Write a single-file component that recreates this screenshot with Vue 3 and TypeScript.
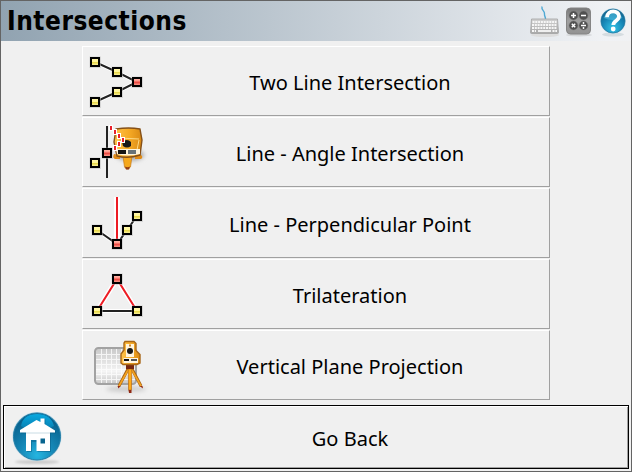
<script setup lang="ts">
interface Node { x: number; y: number; red?: boolean }
interface Item { label: string; kind: string; path?: string; nodes: Node[] }

const items: Item[] = [
  {
    label: 'Two Line Intersection', kind: 'lines', path: 'M12 15 34 25 54 35 34 45 12 55',
    nodes: [{ x: 7, y: 10 }, { x: 29, y: 20 }, { x: 29, y: 40 }, { x: 7, y: 50 }, { x: 49, y: 30, red: true }],
  },
  { label: 'Line - Angle Intersection', kind: 'angle', nodes: [{ x: 7, y: 40 }, { x: 19, y: 30, red: true }] },
  {
    label: 'Line - Perpendicular Point', kind: 'perp', path: 'M14 41 34 55 54 27',
    nodes: [{ x: 9, y: 36 }, { x: 39, y: 36 }, { x: 49, y: 22 }, { x: 29, y: 50, red: true }],
  },
  {
    label: 'Trilateration', kind: 'tri', path: 'M14 51H54',
    nodes: [{ x: 9, y: 46 }, { x: 49, y: 46 }, { x: 29, y: 14, red: true }],
  },
  { label: 'Vertical Plane Projection', kind: 'plane', nodes: [] },
]
const dashes = [[27, 8], [31, 12], [35, 16], [39, 20], [35, 24], [31, 28]]
</script>

<template>
  <main class="window">
    <header class="bar">
      <h1>Intersections</h1>
      <div class="tools">
        <svg width="29" height="34" viewBox="530 4 29 34">
          <defs>
            <linearGradient id="kb" x2="0" y2="1"><stop stop-color="#d2d2d2" /><stop offset="1" stop-color="#a9a9a9" /></linearGradient>
          </defs>
          <ellipse cx="545" cy="35" rx="14" ry="2" fill="#ddd" />
          <path d="M542 6.500c-1 4 3 4 2.500 7.500-.3 2 1 2.500 1 5" fill="none" stroke="#4fa9d4" stroke-width="1.400" />
          <path d="M531.500 19h26l1 13.500q0 1-1 1h-26q-1 0-1-1z" fill="url(#kb)" stroke="#a2a2a2" stroke-width=".8" />
          <path d="M532.500 22h24M532 25h25M532 28h25M532 31h4M552.500 31h4.500" stroke="#f6f6f6" stroke-width="1.800" stroke-dasharray="2 .8" />
          <path d="M538 31h13" stroke="#f6f6f6" stroke-width="1.800" />
        </svg>
        <svg width="28" height="34" viewBox="565 4 28 34">
          <defs>
            <linearGradient id="calc" x2="0" y2="1"><stop stop-color="#777" /><stop offset=".5" stop-color="#a0a0a0" /><stop offset="1" stop-color="#929292" /></linearGradient>
          </defs>
          <ellipse cx="579" cy="35" rx="13" ry="1.500" fill="#d4d6d8" />
          <rect x="566.500" y="8" width="24" height="26" rx="4" fill="url(#calc)" stroke="#858585" />
          <g fill="#505050" stroke="#777" stroke-width=".5">
            <circle cx="573.500" cy="15.500" r="4.400" /><circle cx="583.500" cy="15.500" r="4.400" />
            <circle cx="573.500" cy="25.500" r="4.400" /><circle cx="583.500" cy="25.500" r="4.400" />
          </g>
          <path d="M571 15.500h5M573.500 13v5M581 15.500h5M571.800 23.800l3.400 3.400M575.200 23.800l-3.400 3.400M581 25.500h5" stroke="#fff" stroke-width="1.500" />
          <circle cx="583.500" cy="23" r=".9" fill="#fff" /><circle cx="583.500" cy="28" r=".9" fill="#fff" />
        </svg>
        <svg width="28" height="34" viewBox="599 4 28 34">
          <defs>
            <radialGradient id="help" cx=".5" cy=".8" r=".75"><stop stop-color="#35c4e7" /><stop offset=".6" stop-color="#1685b5" /><stop offset="1" stop-color="#14628c" /></radialGradient>
          </defs>
          <ellipse cx="613" cy="34.500" rx="11" ry="2" fill="#d5dce0" />
          <circle cx="613" cy="21" r="12.800" fill="#bdd9e5" />
          <circle cx="613" cy="21" r="12" fill="url(#help)" stroke="#1e759f" stroke-width=".7" />
          <path d="M603.500 18a10 8 0 0 1 19 0q-10 4-19 0" fill="#5ec8e8" opacity=".5" />
          <path d="M607 17.200c.2-7.700 12-7.400 12-.9 0 4.600-5.700 4.200-5.700 8.700" fill="none" stroke="#fff" stroke-width="3.800" />
          <circle cx="613.200" cy="29" r="2.400" fill="#fff" />
        </svg>
      </div>
    </header>

    <nav class="menu">
      <button v-for="item in items" :key="item.kind" type="button" class="item">
        <svg class="icon" width="68" height="68" viewBox="0 0 68 68">
          <defs>
            <linearGradient :id="item.kind + '-y'" x2="0" y2="1"><stop stop-color="#fff6b0" /><stop offset=".45" stop-color="#fff69a" /><stop offset=".5" stop-color="#e5d43c" /><stop offset="1" stop-color="#fffab8" /></linearGradient>
            <linearGradient :id="item.kind + '-r'" x2="0" y2="1"><stop stop-color="#ffc5b8" /><stop offset=".4" stop-color="#ff9185" /><stop offset=".5" stop-color="#e83e37" /><stop offset="1" stop-color="#ffb8a8" /></linearGradient>
            <linearGradient :id="item.kind + '-o'"><stop stop-color="#ffc34b" /><stop offset=".55" stop-color="#f5a925" /><stop offset="1" stop-color="#d98913" /></linearGradient>
            <linearGradient :id="item.kind + '-g'" x2="0" y2="1"><stop stop-color="#c8c8c8" /><stop offset=".65" stop-color="#f5f5f5" /><stop offset="1" stop-color="#c6c6c6" /></linearGradient>
            <filter :id="item.kind + '-s'" x="-30%" y="-100%" width="160%" height="300%"><feGaussianBlur stdDeviation="2" /></filter>
          </defs>

          <template v-if="item.kind === 'angle'">
            <ellipse cx="47" cy="37" rx="14" ry="6" fill="#aaa" :filter="`url(#${item.kind}-s)`" />
            <path d="M40 38h9l-1.500 11q-3.500 4-6 0z" fill="#f5a81c" stroke="#c57919" stroke-width=".7" />
            <path d="M42 48.500q2.500 1.500 5 0l-1 3h-3z" fill="#933d15" />
            <path d="M31 36q-2 4 1 5h5v-4zM57 36q4 3 1 5h-6v-3z" fill="#df8b17" />
            <path d="M33 11q13-2 24 0l2 11-2 15q-12 4-23 1l-3-14z" :fill="`url(#${item.kind}-o)`" stroke="#855018" stroke-width="1.400" />
            <path d="M35 20l21 1M34 31l1-10M56 22l-2 10" stroke="#ffda83" stroke-width="1" />
            <path d="M39 24q5-4 9 0v4q-4 3-8 0z" fill="#191919" />
            <path d="M33 31h24v5q-12 3-23 0z" fill="#fff4da" />
            <path d="M35 32h8v4h-8z" fill="#151515" /><path d="M45 32h8v4h-8z" fill="#687277" />
            <path d="M24 8v52" stroke="#222" stroke-width="2" />
            <g fill="#fff">
              <rect v-for="(d, i) in dashes" :key="i" :x="d[0] - 1" :y="d[1] - 1" width="4" height="6" />
            </g>
            <g fill="#e8202b">
              <rect v-for="(d, i) in dashes" :key="i" :x="d[0]" :y="d[1]" width="2" height="4" />
            </g>
          </template>

          <template v-if="item.kind === 'plane'">
            <ellipse cx="43" cy="58" rx="20" ry="3" fill="#ccc" :filter="`url(#${item.kind}-s)`" />
            <rect x="12" y="17" width="41" height="36" rx="3.500" :fill="`url(#${item.kind}-g)`" stroke="#a2a2a2" stroke-width="2" />
            <path d="M18.500 18v34M23.500 18v34M28.500 18v34M33.500 18v34M38.500 18v34M13 23.500h39M13 28.500h39M13 33.500h39M13 38.500h39M13 43.500h39M13 48.500h39" stroke="#fff" opacity=".75" />
            <path d="M45 38 36 55M49 38 58 55" stroke="#a86415" stroke-width="3" />
            <path d="M45 39 36 55M49 39 58 55" stroke="#f4a321" stroke-width="1.600" />
            <path d="M45.200 38h3.600L48.400 59h-2.800z" fill="#ffab18" stroke="#bd741b" stroke-width=".8" />
            <path d="M34.500 55h3l-2 2.500zM56.500 55h3l.5 2.500zM45.500 59h3v3h-2.500z" fill="#912913" />
            <path d="M43 34h8v4h-8z" fill="#76260f" />
            <path d="M42 10.500h9l2 2v7l4 4v8.500l-3 1.500H40l-2-1.500v-9l3-4v-7z" :fill="`url(#${item.kind}-o)`" stroke="#a76617" stroke-width="1.400" />
            <path d="M43 13h8v13h-8zM40.500 27H55v5H40.500z" fill="#fff5df" />
            <circle cx="47" cy="20" r="3" fill="#171717" /><path d="M46 13.500h2v2h-2z" fill="#cf852a" />
            <path d="M41 28h5v2h-5z" fill="#111" /><path d="M48 28h6v2h-6z" fill="#555" />
          </template>

          <path v-if="item.path" :d="item.path" fill="none" stroke="#fff" stroke-width="4" />
          <path v-if="item.path" :d="item.path" fill="none" stroke="#222" stroke-width="2" />
          <template v-if="item.kind === 'perp'">
            <path d="M34 8v43" stroke="#fff" stroke-width="6" /><path d="M34 8v43" stroke="#ed1c24" stroke-width="2" />
          </template>
          <template v-if="item.kind === 'tri'">
            <path d="M14 51 34 19 54 51" fill="none" stroke="#fff" stroke-width="5" />
            <path d="M14 51 34 19 54 51" fill="none" stroke="#ed1c24" stroke-width="2" />
            <path d="M14 51H54" stroke="#222" stroke-width="2" />
          </template>
          <g v-for="(n, i) in item.nodes" :key="i">
            <rect :x="n.x - .5" :y="n.y - .5" width="11.500" height="11.500" fill="#bbb" opacity=".5" />
            <rect :x="n.x + 1" :y="n.y + 1" width="8" height="8" :fill="`url(#${item.kind}-${n.red ? 'r' : 'y'})`" stroke="#000" stroke-width="2" />
          </g>
        </svg>
        <span class="label">{{ item.label }}</span>
      </button>
    </nav>

    <button type="button" class="back">
      <svg class="icon" width="68" height="60" viewBox="5 407 68 60">
        <defs>
          <radialGradient id="home" cx=".5" cy=".9" r=".8"><stop stop-color="#25b5e0" /><stop offset=".45" stop-color="#1688b7" /><stop offset="1" stop-color="#08618d" /></radialGradient>
          <linearGradient id="gloss" x2="0" y2="1"><stop stop-color="#08a8df" /><stop offset="1" stop-color="#087bad" /></linearGradient>
          <filter id="soft" x="-20%" y="-100%" width="140%" height="300%"><feGaussianBlur stdDeviation="1.200" /></filter>
        </defs>
        <ellipse cx="37" cy="462" rx="22" ry="2" fill="#ccc" filter="url(#soft)" />
        <circle cx="37" cy="436.500" r="24.500" fill="#b9d7e4" />
        <circle cx="37" cy="436.500" r="23.500" fill="url(#home)" stroke="#217da7" />
        <path d="M21 426q2-12 16-12t17 12q-17 9-33 0" fill="url(#gloss)" />
        <path d="M20 430 36.500 420l4 2v-3.500h4v5.500L55 430.500v2h-5V451H36.500v-10H31v10h-5v-18.500h-6z" fill="#075b83" opacity=".5" transform="translate(1 1)" />
        <path d="M20 430 36.500 420l4 2v-3.500h4v5.500L55 430.500v2h-5V451H36.500v-11H31v11h-5v-18.500h-6z" fill="#fff" />
        <path d="M40.500 438.500H45v5h-4.500z" fill="#08648f" />
        <path d="M26 433h24" stroke="#c9dce4" />
      </svg>
      <span class="label">Go Back</span>
    </button>
  </main>
</template>

<style>
body { margin: 0; }
</style>

<style scoped>
.window { box-sizing: border-box; width: 632px; height: 472px; border: 1px solid #646464; background: #f0f0f0; font-family: "Noto Sans", sans-serif; color: #000; display: flex; flex-direction: column; }
.bar { height: 40px; flex: none; display: flex; align-items: center; justify-content: space-between; padding: 0 4px 0 6px; background: linear-gradient(90deg, #91a3b1, #f0f2f5 96%, #f0f1f3); box-sizing: border-box; }
h1 { margin: 0; font: bold 26px/40px "DejaVu Sans Condensed", "DejaVu Sans", sans-serif; letter-spacing: .5px; white-space: nowrap; }
.tools { display: flex; gap: 6px; }
svg { display: block; flex: none; }
.menu { display: flex; flex-direction: column; gap: 1px; width: 468px; margin: 5px 0 0 81px; }
button { font: inherit; color: inherit; background: #f0f0f0; padding: 0; margin: 0; border-radius: 0; display: flex; align-items: center; box-sizing: border-box; }
.item { height: 70px; border: 1px solid; border-color: #fff #a0a0a0 #a0a0a0 #fff; }
.label { flex: 1; text-align: center; font-size: 20px; line-height: 28px; padding-top: 3px; white-space: nowrap; }
.back { width: 626px; height: 64px; margin: 5px 0 0 2px; border: 1px solid #000; box-shadow: inset 1px 1px #fff, inset -1px -1px #a0a0a0; padding: 1px; }
</style>
